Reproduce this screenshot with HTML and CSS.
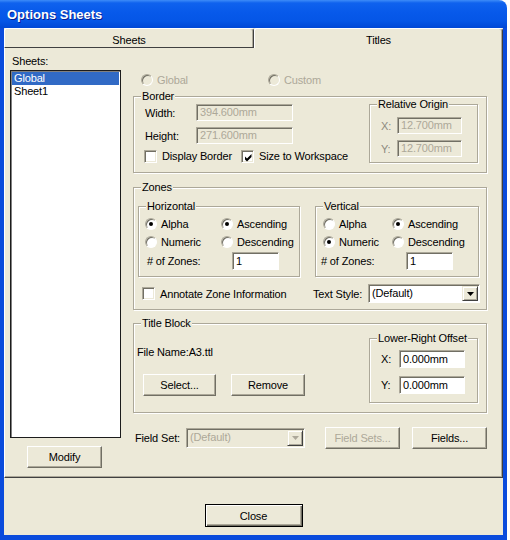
FILE: index.html
```html
<!DOCTYPE html>
<html lang="en">
<head>
  <meta charset="UTF-8" />
  <title>Options Sheets</title>
  <link rel="stylesheet" href="styles.css">
</head>
<body>

  <div class="window">
    <div class="titlebar">Options Sheets</div>
    <div class="frame">

      <div class="tabs">
        <div class="tab tab-sheets">Sheets</div>
        <div class="tab tab-titles">Titles</div>
      </div>

      <div class="panel">
        <div class="left-col">
          <div class="sheets-label">Sheets:</div>
          <div class="listbox">
            <div class="item selected">Global</div>
            <div class="item">Sheet1</div>
          </div>
          <button class="btn modify-btn">Modify</button>
        </div>

        <div class="right-col">
          <div class="scope-row">
            <span class="opt disabled"><span class="radio disabled"></span>Global</span>
            <span class="opt disabled"><span class="radio disabled"></span>Custom</span>
          </div>

          <div class="group border-group">
            <div class="group-title">Border</div>
            <div class="border-body">
              <div class="size-fields">
                <div class="field-row">
                  <span class="lbl">Width:</span>
                  <div class="field disabled">394.600mm</div>
                </div>
                <div class="field-row">
                  <span class="lbl">Height:</span>
                  <div class="field disabled">271.600mm</div>
                </div>
                <div class="check-row">
                  <span class="opt"><span class="check"></span>Display Border</span>
                  <span class="opt"><span class="check"><svg width="9" height="9" viewBox="0 0 9 9"><polygon points="1,3.5 3,5.5 7.5,1 7.5,4 3,8.5 1,6.5" fill="#000"/></svg></span>Size to Workspace</span>
                </div>
              </div>
              <div class="group origin-group">
                <div class="group-title">Relative Origin</div>
                <div class="xy-row">
                  <span class="lbl">X:</span>
                  <div class="field disabled">12.700mm</div>
                </div>
                <div class="xy-row">
                  <span class="lbl">Y:</span>
                  <div class="field disabled">12.700mm</div>
                </div>
              </div>
            </div>
          </div>

          <div class="group zones-group">
            <div class="group-title">Zones</div>
            <div class="axis-row">
              <div class="group axis axis-h">
                <div class="group-title">Horizontal</div>
                <div class="radio-row">
                  <span class="opt"><span class="radio on"></span>Alpha</span>
                  <span class="opt"><span class="radio on"></span>Ascending</span>
                </div>
                <div class="radio-row">
                  <span class="opt"><span class="radio"></span>Numeric</span>
                  <span class="opt"><span class="radio"></span>Descending</span>
                </div>
                <div class="count-row">
                  <span class="lbl"># of Zones:</span>
                  <div class="field">1</div>
                </div>
              </div>
              <div class="group axis axis-v">
                <div class="group-title">Vertical</div>
                <div class="radio-row">
                  <span class="opt"><span class="radio"></span>Alpha</span>
                  <span class="opt"><span class="radio on"></span>Ascending</span>
                </div>
                <div class="radio-row">
                  <span class="opt"><span class="radio on"></span>Numeric</span>
                  <span class="opt"><span class="radio"></span>Descending</span>
                </div>
                <div class="count-row">
                  <span class="lbl"># of Zones:</span>
                  <div class="field">1</div>
                </div>
              </div>
            </div>
            <div class="annotate-row">
              <span class="opt"><span class="check"></span>Annotate Zone Information</span>
              <span class="lbl">Text Style:</span>
              <div class="combo style-combo">
                <span class="combo-text">(Default)</span>
                <span class="combo-btn"><svg width="7" height="4" viewBox="0 0 7 4"><polygon points="0,0 7,0 3.5,4" fill="#000"/></svg></span>
              </div>
            </div>
          </div>

          <div class="group title-group">
            <div class="group-title">Title Block</div>
            <div class="title-body">
              <div class="file-side">
                <div class="file-name">File Name:A3.ttl</div>
                <div class="file-buttons">
                  <button class="btn select-btn">Select...</button>
                  <button class="btn remove-btn">Remove</button>
                </div>
              </div>
              <div class="group offset-group">
                <div class="group-title">Lower-Right Offset</div>
                <div class="xy-row">
                  <span class="lbl">X:</span>
                  <div class="field">0.000mm</div>
                </div>
                <div class="xy-row">
                  <span class="lbl">Y:</span>
                  <div class="field">0.000mm</div>
                </div>
              </div>
            </div>
          </div>

          <div class="fieldset-row">
            <span class="lbl">Field Set:</span>
            <div class="combo disabled fieldset-combo">
              <span class="combo-text">(Default)</span>
              <span class="combo-btn"><svg width="7" height="4" viewBox="0 0 7 4"><polygon points="0,0 7,0 3.5,4" fill="#aca899"/></svg></span>
            </div>
            <button class="btn disabled fieldsets-btn">Field Sets...</button>
            <button class="btn fields-btn">Fields...</button>
          </div>
        </div>
      </div>

      <div class="footer">
        <button class="btn default close-btn">Close</button>
      </div>

    </div>
  </div>

</body>
</html>
```

FILE: styles.css
```css
* {
  box-sizing: border-box;
}
body {
  margin: 0;
  background: #fff;
  font-family: "Liberation Sans", Arial, sans-serif;
  font-size: 11px;
  letter-spacing: -0.15px;
  color: #000;
  overflow: hidden;
}
.window {
  width: 507px;
  height: 540px;
}
.titlebar {
  height: 28px;
  padding: 1px 0 0 7px;
  display: flex;
  align-items: center;
  color: #fff;
  font-size: 13px;
  font-weight: bold;
  letter-spacing: 0;
  text-shadow: 1px 1px #0a1f8f;
  border-top-right-radius: 8px;
  background: linear-gradient(to bottom, #3d8cf8 0, #0f62ee 3px, #0759ea 45%, #0556e6 75%, #0048d6 100%);
}
.frame {
  height: 512px;
  border: 4px solid #0a4bdc;
  border-top: 0;
  border-bottom-width: 5px;
  background: #ece9d8;
}

/* tabs */
.tabs {
  display: flex;
  height: 20px;
}
.tab {
  height: 20px;
  padding-top: 3px;
  display: flex;
  align-items: center;
  justify-content: center;
  border-top: 1px solid #fff;
  border-left: 1px solid #fff;
  border-right: 1px solid #404040;
  box-shadow: inset -1px 0 #aca899;
  border-radius: 3px 3px 0 0;
}
.tab-sheets {
  width: 250px;
  border-bottom: 1px solid #404040;
}
.tab-titles {
  flex: 1;
}
.panel {
  display: flex;
  height: 430px;
  padding-left: 5px;
  border-left: 1px solid #fff;
  border-right: 1px solid #404040;
  border-bottom: 1px solid #404040;
  box-shadow: inset -1px -1px #aca899;
}

/* left column */
.left-col {
  width: 111px;
}
.sheets-label {
  margin-top: 7px;
  padding-left: 2px;
  line-height: 13px;
}
.listbox {
  margin-top: 2px;
  height: 368px;
  padding: 1px;
  background: #fff;
  border: 1px solid #1c1c1c;
  box-shadow: inset 1px 1px #808080;
}
.item {
  height: 13px;
  line-height: 13px;
  padding-left: 2px;
}
.item.selected {
  background: #316ac5;
  color: #fff;
}
.modify-btn {
  margin: 8px 0 0 17px;
  width: 75px;
  height: 22px;
}

/* common controls */
.btn {
  font: inherit;
  letter-spacing: inherit;
  color: #000;
  background: #ece9d8;
  padding: 0;
  display: flex;
  align-items: center;
  justify-content: center;
  border: 1px solid;
  border-color: #fff #716f64 #716f64 #fff;
  box-shadow: inset -1px -1px #aca899;
}
.btn.disabled {
  color: #aca899;
}
.btn.default {
  border-color: #000;
  box-shadow: inset 1px 1px #fff, inset -1px -1px #716f64, inset -2px -2px #aca899;
}
.opt {
  display: flex;
  align-items: center;
  gap: 4px;
  white-space: nowrap;
  line-height: 14px;
}
.opt.disabled {
  color: #aca899;
}
.radio {
  width: 12px;
  height: 12px;
  flex: none;
  display: flex;
  align-items: center;
  justify-content: center;
  border-radius: 50%;
  border: 1px solid;
  border-color: #aca899 #fff #fff #aca899;
  box-shadow: inset 1px 1px #716f64;
  background: #fff;
}
.radio.disabled {
  background: #ece9d8;
}
.radio.on::after {
  content: "";
  width: 4px;
  height: 4px;
  border-radius: 50%;
  background: #000;
}
.check {
  width: 13px;
  height: 13px;
  flex: none;
  display: flex;
  align-items: center;
  justify-content: center;
  padding: 1px 0 0 1px;
  border: 1px solid;
  border-color: #aca899 #fff #fff #aca899;
  box-shadow: inset 1px 1px #716f64, inset -1px -1px #ece9d8;
  background: #fff;
}
.field {
  height: 17px;
  line-height: 15px;
  padding-left: 3px;
  white-space: nowrap;
  overflow: hidden;
  border: 1px solid;
  border-color: #aca899 #fff #fff #aca899;
  box-shadow: inset 1px 1px #716f64;
  background: #fff;
}
.field.disabled {
  background: #ece9d8;
  color: #aca899;
}
.combo {
  display: flex;
  height: 19px;
  padding: 1px;
  border: 1px solid;
  border-color: #aca899 #fff #fff #aca899;
  box-shadow: inset 1px 1px #716f64;
  background: #fff;
}
.combo.disabled {
  background: #ece9d8;
  color: #aca899;
}
.combo-text {
  flex: 1;
  padding-left: 2px;
  line-height: 15px;
  white-space: nowrap;
}
.combo-btn {
  width: 16px;
  flex: none;
  display: flex;
  align-items: center;
  justify-content: center;
  border: 1px solid;
  border-color: #ece9d8 #404040 #404040 #ece9d8;
  box-shadow: inset 1px 1px #fff, inset -1px -1px #aca899;
  background: #ece9d8;
}
.group {
  border: 1px solid #aca899;
  box-shadow: inset 1px 1px #fff, 1px 1px #fff;
}
.group-title {
  display: table;
  margin: -7px 0 0 7px;
  padding: 0 1px;
  line-height: 13px;
  background: #ece9d8;
}

/* right column */
.right-col {
  width: 354px;
  margin-left: 12px;
}
.scope-row {
  display: flex;
  height: 14px;
  margin-top: 25px;
  padding-left: 8px;
}
.scope-row .opt:first-child {
  width: 127px;
}

.border-group {
  margin-top: 9px;
  padding-bottom: 9px;
}
.border-body {
  display: flex;
  padding-left: 11px;
}
.size-fields {
  width: 224px;
}
.field-row {
  display: flex;
  align-items: center;
  margin-top: 6px;
}
.field-row:first-child {
  margin-top: 1px;
}
.field-row .lbl {
  width: 51px;
}
.field-row .field {
  width: 97px;
}
.check-row {
  display: flex;
  height: 13px;
  margin: 6px 0 0 -1px;
}
.check-row .opt {
  gap: 5px;
  line-height: 13px;
}
.check-row .opt:first-child {
  width: 97px;
}
.origin-group {
  width: 109px;
  margin-top: 1px;
  padding-bottom: 5px;
}
.xy-row {
  display: flex;
  align-items: center;
  margin-top: 6px;
  padding-left: 11px;
}
.origin-group .lbl {
  width: 16px;
  color: #8c897e;
}
.origin-group .field {
  width: 65px;
}

.zones-group {
  margin-top: 14px;
  padding-bottom: 6px;
}
.axis-row {
  display: flex;
  margin-top: 12px;
  padding-left: 4px;
}
.axis {
  padding-bottom: 6px;
}
.axis-h {
  width: 162px;
}
.axis-v {
  width: 164px;
  margin-left: 15px;
}
.radio-row {
  display: flex;
  height: 14px;
  margin-top: 4px;
}
.axis-h .radio-row {
  padding-left: 6px;
}
.axis-h .radio-row .opt:first-child {
  width: 76px;
}
.axis-v .radio-row {
  padding-left: 7px;
}
.axis-v .radio-row .opt:first-child {
  width: 69px;
}
.count-row {
  display: flex;
  align-items: center;
  margin-top: 3px;
}
.axis-h .count-row {
  padding-left: 8px;
}
.axis-v .count-row {
  padding-left: 5px;
}
.count-row .lbl {
  width: 85px;
}
.count-row .field {
  width: 47px;
  height: 18px;
  line-height: 16px;
}
.annotate-row {
  display: flex;
  align-items: center;
  height: 19px;
  margin-top: 7px;
  padding-left: 8px;
}
.annotate-row .opt {
  width: 171px;
  gap: 5px;
}
.annotate-row .lbl {
  width: 55px;
}
.style-combo {
  width: 112px;
}

.title-group {
  margin-top: 13px;
  padding-bottom: 9px;
}
.title-body {
  display: flex;
}
.file-side {
  width: 235px;
  padding-left: 3px;
}
.file-name {
  margin-top: 15px;
  line-height: 14px;
}
.file-buttons {
  display: flex;
  gap: 15px;
  margin-top: 15px;
  padding-left: 6px;
}
.file-buttons .btn {
  height: 22px;
}
.select-btn {
  width: 73px;
}
.remove-btn {
  width: 74px;
}
.offset-group {
  width: 109px;
  margin-top: 8px;
  padding-bottom: 8px;
}
.offset-group .xy-row {
  margin-top: 8px;
}
.offset-group .xy-row:nth-child(2) {
  margin-top: 5px;
}
.offset-group .lbl {
  width: 18px;
}
.offset-group .field {
  width: 66px;
  height: 18px;
  line-height: 16px;
}

.fieldset-row {
  display: flex;
  align-items: center;
  height: 22px;
  margin-top: 14px;
  padding-left: 2px;
}
.fieldset-row .lbl {
  width: 51px;
}
.fieldset-combo {
  width: 119px;
  height: 20px;
}
.fieldset-row .btn {
  width: 75px;
  height: 22px;
}
.fieldsets-btn {
  margin-left: 20px;
}
.fields-btn {
  margin-left: 12px;
}

.footer {
  display: flex;
  justify-content: center;
  padding-top: 26px;
}
.close-btn {
  width: 98px;
  height: 23px;
}
```
